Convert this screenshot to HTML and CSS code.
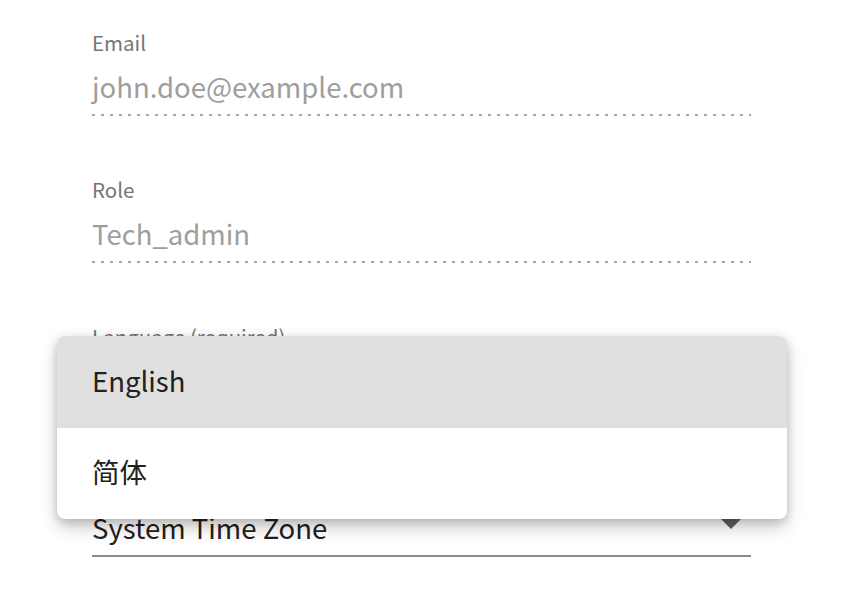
FILE: index.html
```html
<!DOCTYPE html>
<html lang="en">
<head>
<meta charset="utf-8">
<link rel="stylesheet" href="styles.css">
</head>
<body>
<div class="page">
  <div class="form">
    <div class="field">
      <div class="label">Email</div>
      <div class="value disabled">john.doe@example.com</div>
      <div class="line dotted"></div>
    </div>
    <div class="field">
      <div class="label">Role</div>
      <div class="value disabled">Tech_admin</div>
      <div class="line dotted"></div>
    </div>
    <div class="field">
      <div class="label">Language (required)</div>
      <div class="value select"><span>English</span><span class="arrow"></span></div>
      <div class="line solid"></div>
    </div>
    <div class="field">
      <div class="label">Time Zone</div>
      <div class="value select"><span>System Time Zone</span><span class="arrow"></span></div>
      <div class="line solid"></div>
    </div>
  </div>
  <ul class="menu">
    <li class="item selected">English</li>
    <li class="item">简体</li>
  </ul>
</div>
</body>
</html>
```

FILE: styles.css
```css
html, body {
  margin: 0;
  padding: 0;
  background: #ffffff;
}

body {
  font-family: "Noto Sans CJK SC", "Noto Sans", sans-serif;
  width: 846px;
  height: 604px;
  overflow: hidden;
}

.page {
  position: relative;
  width: 846px;
  height: 604px;
}

.form {
  padding: 30px 0 0 92px;
  width: 659px;
  display: flex;
  flex-direction: column;
}

.field {
  height: 147px;
  display: flex;
  flex-direction: column;
}

.label {
  font-size: 20.5px;
  line-height: 24px;
  height: 24px;
  color: #757575;
  white-space: nowrap;
}

.value {
  margin-top: 14px;
  font-size: 27.5px;
  line-height: 36px;
  height: 36px;
  color: #212121;
  white-space: nowrap;
}

.value.disabled {
  color: #9e9e9e;
}

.value.select {
  display: flex;
  justify-content: space-between;
  align-items: flex-start;
}

.arrow {
  width: 0;
  height: 0;
  margin: 9px 9px 0 0;
  border-left: 11px solid transparent;
  border-right: 11px solid transparent;
  border-top: 11px solid #616161;
}

.line {
  margin-top: 10px;
  height: 2px;
}

.line.dotted {
  background-image: linear-gradient(to right, #a6a6a6 3px, transparent 3px);
  background-size: 9px 2px;
  background-repeat: repeat-x;
}

.line.solid {
  background: #8c8c8c;
}

.menu {
  position: absolute;
  left: 57px;
  top: 336px;
  width: 730px;
  margin: 0;
  padding: 0;
  list-style: none;
  background: #ffffff;
  border-radius: 8px;
  overflow: hidden;
  box-shadow: 0 9px 18px rgba(0, 0, 0, 0.18), 0 4px 8px rgba(0, 0, 0, 0.12), 0 0 14px rgba(0, 0, 0, 0.06);
}

.item {
  box-sizing: border-box;
  height: 91.5px;
  padding: 0 0 4px 35px;
  display: flex;
  align-items: center;
  font-size: 27.5px;
  color: #212121;
}

.item.selected {
  background: #e0e0e0;
}
```
